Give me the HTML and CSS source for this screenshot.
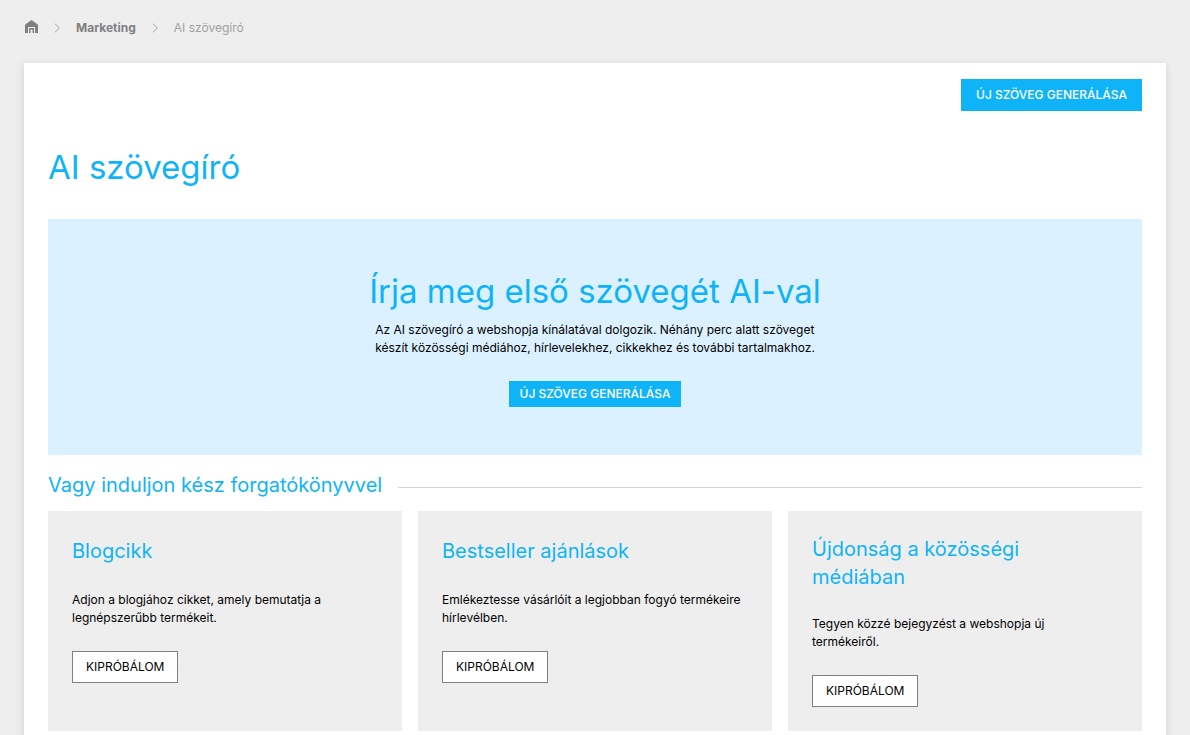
FILE: index.html
```html
<!DOCTYPE html>
<html lang="hu">
<head>
<meta charset="utf-8">
<title>AI szövegíró</title>
<link rel="stylesheet" href="styles.css">
</head>
<body>
<nav class="breadcrumb" aria-label="Navigáció">
  <a class="home" href="#" aria-label="Kezdőlap">
    <svg width="13" height="15" viewBox="0 0 13 15"><path fill="currentColor" fill-rule="evenodd" d="M6.500 0 .6 4.200Q0 4.700 0 5.500V13h3V7h7v6h3V5.500q0-.8-.6-1.300zM4 8v5h1.500V9.500h2V13H9V8z"/></svg>
  </a>
  <svg class="chevron" width="6" height="10" viewBox="0 0 6 10"><path d="m1 .7 4.300 4.300L1 9.300"/></svg>
  <a class="section" href="#">Marketing</a>
  <svg class="chevron" width="6" height="10" viewBox="0 0 6 10"><path d="m1 .7 4.300 4.300L1 9.300"/></svg>
  <span class="current">AI szövegíró</span>
</nav>
<main class="panel">
  <div class="toolbar"><button class="button primary" type="button">Új szöveg generálása</button></div>
  <h1 class="title">AI szövegíró</h1>
  <section class="hero">
    <h2 class="title">Írja meg első szövegét AI-val</h2>
    <p class="text">Az AI szövegíró a webshopja kínálatával dolgozik. Néhány perc alatt szöveget<br>készít közösségi médiához, hírlevelekhez, cikkekhez és további tartalmakhoz.</p>
    <button class="button primary compact" type="button">Új szöveg generálása</button>
  </section>
  <h2 class="divider">Vagy induljon kész forgatókönyvvel</h2>
  <div class="cards">
    <article class="card">
      <h3 class="card-title">Blogcikk</h3>
      <p class="text">Adjon a blogjához cikket, amely bemutatja a legnépszerűbb termékeit.</p>
      <button class="button outline" type="button">Kipróbálom</button>
    </article>
    <article class="card">
      <h3 class="card-title">Bestseller ajánlások</h3>
      <p class="text">Emlékeztesse vásárlóit a legjobban fogyó termékeire hírlevélben.</p>
      <button class="button outline" type="button">Kipróbálom</button>
    </article>
    <article class="card">
      <h3 class="card-title">Újdonság a közösségi médiában</h3>
      <p class="text">Tegyen közzé bejegyzést a webshopja új termékeiről.</p>
      <button class="button outline" type="button">Kipróbálom</button>
    </article>
  </div>
</main>
</body>
</html>
```
FILE: styles.css
```css
* { box-sizing: border-box; }
body { margin: 0; background: #eee; color: #000; font: 12px/18px Inter, sans-serif; }
h1, h2, h3, p { margin: 0; font-weight: 400; }
.breadcrumb { display: flex; align-items: center; height: 55px; padding: 0 25px; color: #808080; }
.breadcrumb a { color: inherit; text-decoration: none; }
.breadcrumb .home { display: flex; }
.chevron { margin: 0 16px; fill: none; stroke: #a0a0a0; }
.section { font-weight: 700; }
.current { color: #a0a0a0; }
.panel { margin: 8px 24px 0; padding: 16px 24px 24px; background: #fff; box-shadow: 0 2px 8px rgba(0, 0, 0, .12); }
.toolbar { display: flex; justify-content: flex-end; }
.button { height: 32px; padding: 0 15px; border: 0; font: 500 12px/18px Inter, sans-serif; text-transform: uppercase; cursor: pointer; }
.primary { background: #0fb4f8; color: #fff; }
.compact { height: 26px; padding: 0 11px; }
.outline { padding: 0 13px; border: 1px solid #808080; background: #fff; color: #000; font-weight: 400; }
.title { color: #0fb4f8; font-size: 33px; line-height: 44px; }
.panel > .title { margin: 34px 0 30px; }
.hero { display: flex; flex-direction: column; align-items: center; padding: 50px 24px 48px; background: #dbf1ff; }
.hero .text { margin: 8px 0 24px; }
.divider { display: flex; align-items: center; gap: 16px; margin: 16px 0 12px; color: #0fb4f8; font-size: 20px; line-height: 28px; }
.divider::after { flex: 1; height: 1px; margin-top: 4px; background: #d4d4d4; content: ""; }
.cards { display: grid; grid-template-columns: repeat(3, 1fr); gap: 16px; }
.card { padding: 24px 30px 24px 24px; background: #eee; }
.card-title { display: flex; align-items: center; min-height: 32px; color: #0fb4f8; font-size: 20px; line-height: 28px; }
.card .text { margin: 24px 0; }
```
